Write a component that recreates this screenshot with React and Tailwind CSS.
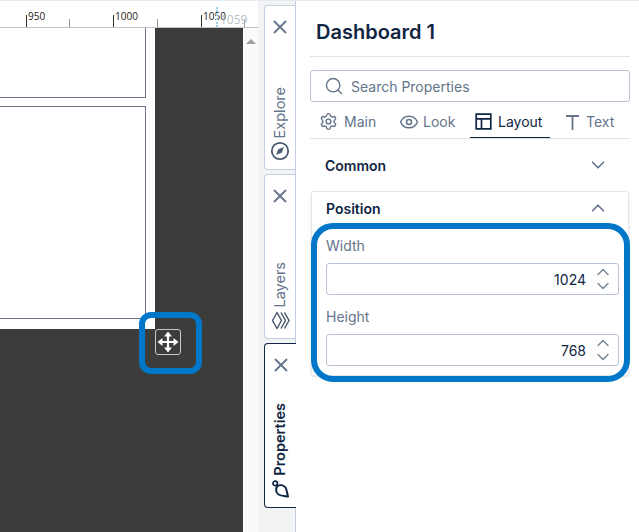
import React from 'react';
import { X, Search, Settings, Eye, ChevronDown, ChevronUp } from 'lucide-react';

const TICKS = [
  { x: 26, major: true, label: '950' },
  { x: 69 },
  { x: 113, major: true, label: '1000' },
  { x: 157 },
  { x: 201, major: true, label: '1050' },
  { x: 244 },
];

const CompassIcon = () => (
  <svg width="20" height="20" viewBox="0 0 20 20" fill="none" stroke="#4b5a6e" strokeWidth="1.8">
    <circle cx="10" cy="10" r="8.2" />
    <path d="M13.5 6.5 L11.6 11.6 L6.5 13.5 L8.4 8.4 Z" fill="#4b5a6e" strokeWidth="0.5" />
  </svg>
);

const LayersIcon = () => (
  <svg width="19" height="19" viewBox="0 0 19 19" fill="none" stroke="#4b5a6e" strokeWidth="1.5" strokeLinejoin="round">
    <path d="M6 1.5 L1.5 9.5 L6 17.5 L10.5 9.5 Z" />
    <path d="M10 1.5 L14.5 9.5 L10 17.5" />
    <path d="M13.5 1.5 L18 9.5 L13.5 17.5" />
  </svg>
);

const PropsIcon = () => (
  <svg width="20" height="20" viewBox="0 0 20 20" fill="none" stroke="#0f2542" strokeWidth="2" strokeLinejoin="round">
    <path d="M6.5 7 C9 5.5 12.5 6 14.5 8.5 C15.8 10.5 16 14 17 17.5 C13.5 17 10 17 7.5 15.5 C5 14 4.2 9.5 6.5 7 Z" />
    <circle cx="4.2" cy="4.4" r="2.2" strokeWidth="1.7" />
  </svg>
);

const MoveIcon = () => (
  <svg width="22" height="22" viewBox="0 0 22 22" fill="#fff" stroke="#fff">
    <path d="M11 3 V19 M3 11 H19" fill="none" strokeWidth="2.2" />
    <path d="M11 .5 L15 5.5 H7 Z M11 21.5 L15 16.5 H7 Z M.5 11 L5.5 7 V15 Z M21.5 11 L16.5 7 V15 Z" strokeWidth="0" />
  </svg>
);

const LayoutIcon = () => (
  <svg width="17" height="17" viewBox="0 0 17 17" fill="none" stroke="#0f2542" strokeWidth="1.7">
    <path d="M1.2 1.2 H15.8 V15.8 H1.2 Z M1.2 5.8 H15.8 M6.5 5.8 V15.8" />
  </svg>
);

const TextIcon = () => (
  <svg width="17" height="18" viewBox="0 0 17 18" fill="none" stroke="#64748b" strokeWidth="1.8">
    <path d="M2 3 H15 M8.5 3 V17" />
  </svg>
);

const SideTab = ({ label, icon, active }) => (
  <div
    className={`h-[165px] flex flex-col items-center rounded-l-[4px] border border-r-0 pt-[10px] pb-[8px] ${active ? 'bg-white border-[#0f2542] -mr-px' : 'bg-white border-[#c3cede]'}`}
  >
    <X size={22} strokeWidth={2} className="text-[#64748b]" />
    <div className="flex-1" />
    <span className={`[writing-mode:vertical-rl] rotate-180 text-[14.5px] leading-none mb-[3px] ${active ? 'font-semibold text-[#0f2542]' : 'text-[#64748b]'}`}>{label}</span>
    {icon}
  </div>
);

const TabItem = ({ icon, label, active, className }) => (
  <div className={`flex items-center h-[33px] ${active ? 'border-b border-[#0f2542] text-[#0f2542] -mb-px' : 'text-[#64748b]'} ${className}`}>
    {icon}
    <span className="text-[14px]">{label}</span>
  </div>
);

const NumberField = ({ value }) => (
  <div className="flex items-center justify-end h-[32px] border border-[#b8c4d4] rounded-[3px] pr-[5px]">
    <span className="text-[14px] text-[#0f2542] mr-[7px]">{value}</span>
    <div className="flex flex-col text-[#7a8798]">
      <ChevronUp size={20} strokeWidth={1.7} className="-mb-[4px]" />
      <ChevronDown size={20} strokeWidth={1.7} className="-mt-[2px]" />
    </div>
  </div>
);

export default function App() {
  return (
    <div className="relative flex flex-col w-[639px] h-[532px] overflow-hidden bg-white font-['Inter',sans-serif]">
      <div className="h-px bg-[#e4e9f2]" />
      <div className="flex flex-1 min-h-0">
        {/* canvas + ruler */}
        <div className="flex flex-col w-[258px]">
          <div className="relative h-[27px] shrink-0 border-b border-[#bcc5d0] bg-white font-['Open_Sans',sans-serif] text-[10px] text-[#222]">
            {TICKS.map((t) => (
              <div key={t.x}>
                <div className={`absolute bottom-0 w-px ${t.major ? 'h-[12px] bg-[#333]' : 'h-[8px] bg-[#999]'}`} style={{ left: t.x }} />
                {t.label && <span className="absolute top-[10px] leading-[11px]" style={{ left: t.x + 2 }}>{t.label}</span>}
              </div>
            ))}
            <span className="absolute left-[220px] top-[11px] text-[12px] leading-[15px] text-[#b9bfc8]">1059</span>
            <div className="absolute left-[216px] top-[6px] bottom-0 border-l-2 border-dotted border-[#9fd0ea]" />
          </div>
          <div className="flex flex-1 min-h-0">
            <div className="flex flex-col w-[243px] bg-[#3c3c3b]">
              <div className="w-[155px] h-[301px] bg-white shrink-0 flex flex-col">
                <div className="w-[146px] h-[70px] border-r border-b border-[#6b7588]" />
                <div className="w-[146px] h-[213px] mt-[8px] border-t border-r border-b border-[#6b7588]" />
              </div>
              <div className="ml-[155px] w-[26px] h-[26px] flex items-center justify-center rounded-[3px] border border-[#c9c9c9]">
                <MoveIcon />
              </div>
            </div>
            <div className="w-[15px] bg-[#fafafa] flex justify-center pt-[11px]">
              <div className="w-0 h-0 border-l-[5px] border-r-[5px] border-b-[5px] border-l-transparent border-r-transparent border-b-[#a0a0a0]" />
            </div>
          </div>
        </div>

        {/* side tabs */}
        <div className="flex flex-col gap-[4px] w-[38px] pl-[6px] pt-[4px] bg-[#f2f3f4] border-r border-[#c3cede]">
          <SideTab label="Explore" icon={<CompassIcon />} />
          <SideTab label="Layers" icon={<LayersIcon />} />
          <SideTab label="Properties" active icon={<PropsIcon />} />
        </div>

        {/* properties panel */}
        <div className="flex-1 flex flex-col pl-[14px] pr-[9px]">
          <h1 className="h-[56px] pt-[6px] flex items-center pl-[6px] border-b border-[#dfe3ea] text-[20px] font-semibold text-[#0f2542]">Dashboard 1</h1>
          <div className="mt-[13px] h-[32px] flex items-center border border-[#b8c4d4] rounded-[3px] pl-[13px] gap-[7px] text-[#64748b]">
            <Search size={20} strokeWidth={1.7} />
            <span className="text-[14px]">Search Properties</span>
          </div>
          <div className="mt-[3px] flex border-b border-[#dfe3ea] h-[34px]">
            <TabItem className="pl-[9px] w-[80px] gap-[6px]" icon={<Settings size={19} strokeWidth={1.8} />} label="Main" />
            <TabItem className="pl-[9px] w-[80px] gap-[4px]" icon={<Eye size={20} strokeWidth={1.8} />} label="Look" />
            <TabItem active className="pl-[5px] w-[80px] gap-[6px]" icon={<LayoutIcon />} label="Layout" />
            <TabItem className="pl-[14px] flex-1 gap-[5px]" icon={<TextIcon />} label="Text" />
          </div>
          <div className="h-[52px] flex items-center justify-between pl-[15px] pr-[21px]">
            <span className="text-[14px] font-semibold text-[#0f2542]">Common</span>
            <ChevronDown size={22} strokeWidth={1.8} className="text-[#64748b]" />
          </div>
          <div className="mx-px border border-[#e3e6ec] rounded-[3px] h-[185px] pl-[14px] pr-[9px] shadow-sm">
            <div className="h-[32px] flex items-center justify-between pr-[10px]">
              <span className="text-[14px] font-semibold text-[#0f2542]">Position</span>
              <ChevronUp size={22} strokeWidth={1.8} className="text-[#64748b]" />
            </div>
            <div className="mt-[12px] text-[14px] leading-[20px] text-[#64748b]">Width</div>
            <div className="mt-[7px]"><NumberField value="1024" /></div>
            <div className="mt-[12px] text-[14px] leading-[20px] text-[#64748b]">Height</div>
            <div className="mt-[7px]"><NumberField value="768" /></div>
          </div>
        </div>
      </div>

      {/* callouts drawn over the screenshot */}
      <div className="absolute left-[139px] top-[312px] w-[63px] h-[62px] rounded-[12px] border-[6px] border-[#0077c8]" />
      <div className="absolute left-[311px] top-[223px] w-[319px] h-[159px] rounded-[22px] border-[6px] border-[#0077c8]" />
    </div>
  );
}
